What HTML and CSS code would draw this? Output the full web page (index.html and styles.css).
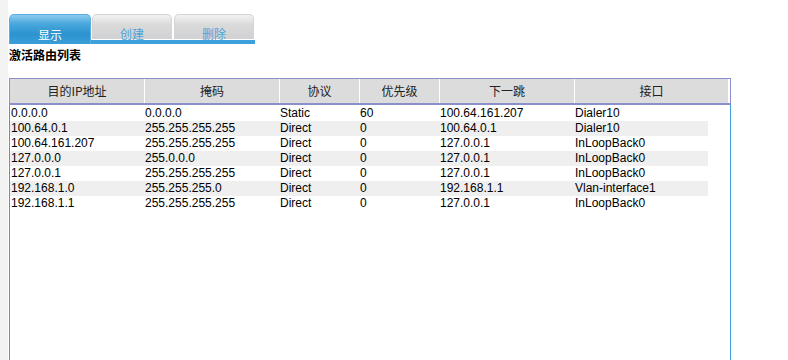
FILE: index.html
```html
<!DOCTYPE html>
<html lang="zh-CN">
<head>
  <meta charset="UTF-8" />
  <title>激活路由列表</title>
  <link rel="stylesheet" href="styles.css">
</head>
<body>
  <div class="page">
    <ul class="tabs">
      <li class="tab active">显示</li>
      <li class="tab">创建</li>
      <li class="tab">删除</li>
    </ul>

    <h3 class="title">激活路由列表</h3>

    <div class="grid">
      <div class="grid-head">
        <div class="hcell c1">目的IP地址</div>
        <div class="hcell c2">掩码</div>
        <div class="hcell c3">协议</div>
        <div class="hcell c4">优先级</div>
        <div class="hcell c5">下一跳</div>
        <div class="hcell c6">接口</div>
      </div>
      <div class="grid-body">
        <table class="routes">
          <colgroup>
            <col class="w1"><col class="w2"><col class="w3"><col class="w4"><col class="w5"><col class="w6">
          </colgroup>
          <tbody>
            <tr><td>0.0.0.0</td><td>0.0.0.0</td><td>Static</td><td>60</td><td>100.64.161.207</td><td>Dialer10</td></tr>
            <tr><td>100.64.0.1</td><td>255.255.255.255</td><td>Direct</td><td>0</td><td>100.64.0.1</td><td>Dialer10</td></tr>
            <tr><td>100.64.161.207</td><td>255.255.255.255</td><td>Direct</td><td>0</td><td>127.0.0.1</td><td>InLoopBack0</td></tr>
            <tr><td>127.0.0.0</td><td>255.0.0.0</td><td>Direct</td><td>0</td><td>127.0.0.1</td><td>InLoopBack0</td></tr>
            <tr><td>127.0.0.1</td><td>255.255.255.255</td><td>Direct</td><td>0</td><td>127.0.0.1</td><td>InLoopBack0</td></tr>
            <tr><td>192.168.1.0</td><td>255.255.255.0</td><td>Direct</td><td>0</td><td>192.168.1.1</td><td>Vlan-interface1</td></tr>
            <tr><td>192.168.1.1</td><td>255.255.255.255</td><td>Direct</td><td>0</td><td>127.0.0.1</td><td>InLoopBack0</td></tr>
          </tbody>
        </table>
      </div>
    </div>
  </div>
</body>
</html>
```

FILE: styles.css
```css
html, body {
  margin: 0;
  height: 100%;
  overflow: hidden;
}
body {
  font-family: "Liberation Sans", Arial, "Noto Sans CJK SC", sans-serif;
  font-size: 12px;
  color: #000;
  background: linear-gradient(to right, #f3f3f3 8px, #fff 8px);
}
.page {
  padding: 14px 0 0 9px;
}

/* tabs */
.tabs {
  display: flex;
  gap: 1px;
  width: 246px;
  height: 26px;
  margin: 0;
  padding: 0;
  list-style: none;
  border-bottom: 4px solid #3d9fdb;
}
.tab {
  width: 80px;
  height: 25px;
  padding-top: 12px;
  box-sizing: border-box;
  line-height: 14px;
  text-align: center;
  font-family: "Noto Sans CJK SC", sans-serif;
  font-size: 12px;
  color: #4ba4db;
  background: linear-gradient(#f2f2f2, #dadada 40%, #d0d1d3);
  border: 1px solid #d4d4d4;
  border-bottom: none;
  border-radius: 5px 5px 0 0;
}
.tab.active {
  width: 82px;
  height: 30px;
  padding-top: 13px;
  margin-bottom: -4px;
  color: #fff;
  border-color: #5aaee0;
  background: linear-gradient(#8ccbee, #4aa8dd 30%, #2c93d0 65%, #3a9ed8);
}
.tab:last-child {
  margin-left: 1px;
}

.title {
  margin: 4px 0 0;
  font-family: "Noto Sans CJK SC", sans-serif;
  font-size: 12px;
  line-height: 13px;
  font-weight: bold;
}

/* grid */
.grid {
  width: 722px;
  margin-top: 17px;
}
.grid-head {
  display: flex;
  gap: 1px;
  height: 24px;
  padding-right: 2px;
  border: 1px solid #8a90cc;
  border-bottom-width: 2px;
  background: #fff;
}
.hcell {
  background: #dcdcdc;
  line-height: 24px;
  text-align: center;
  font-family: "Noto Sans CJK SC", sans-serif;
  font-size: 12px;
  color: #222;
}
.c1 { width: 134px; }
.c2 { width: 134px; }
.c3 { width: 79px; }
.c4 { width: 79px; }
.c5 { width: 134px; }
.c6 { flex: 1; }

.grid-body {
  height: 260px;
  border-left: 1px solid #3d9fdb;
  border-right: 1px solid #3d9fdb;
  padding-top: 1px;
}
.routes {
  width: 698px;
  border-collapse: collapse;
  table-layout: fixed;
}
.w1 { width: 135px; }
.w2 { width: 135px; }
.w3 { width: 80px; }
.w4 { width: 80px; }
.w5 { width: 135px; }
.w6 { width: 133px; }
.routes td {
  height: 15px;
  padding: 0 0 0 1px;
  line-height: 15px;
  white-space: nowrap;
}
.routes td:not(:first-child) {
  padding-left: 0;
}
.routes tr:nth-child(even) td {
  background: #efefef;
}
```
